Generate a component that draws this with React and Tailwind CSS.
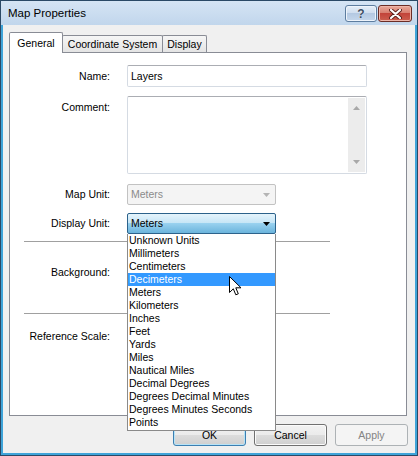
import React from 'react'

const UNITS = [
  'Unknown Units',
  'Millimeters',
  'Centimeters',
  'Decimeters',
  'Meters',
  'Kilometers',
  'Inches',
  'Feet',
  'Yards',
  'Miles',
  'Nautical Miles',
  'Decimal Degrees',
  'Degrees Decimal Minutes',
  'Degrees Minutes Seconds',
  'Points',
]

function Label({ children, className = '' }) {
  return <div className={`w-[100px] shrink-0 text-right ${className}`}>{children}</div>
}

function Arrow({ color }) {
  return (
    <svg width="7" height="4" viewBox="0 0 7 4" className="shrink-0">
      <path d="M0 0H7L3.5 4Z" fill={color} />
    </svg>
  )
}

function Button({ children, variant }) {
  if (variant === 'disabled') {
    return (
      <div className="w-[73px] h-[22px] rounded-[3px] border border-[#adb2b5] bg-[#f4f4f4] text-[#838383] flex items-center justify-center">
        {children}
      </div>
    )
  }
  const border = variant === 'default' ? 'border-[#3c7fb1] shadow-[inset_0_0_0_1px_#b7e3f7]' : 'border-[#707070] shadow-[inset_0_0_0_1px_#fbfbfb]'
  return (
    <div className={`w-[73px] h-[22px] rounded-[3px] border ${border} bg-[linear-gradient(#f2f2f2,#ebebeb_50%,#dddddd_50%,#cfcfcf)] flex items-center justify-center`}>
      {children}
    </div>
  )
}

function Cursor() {
  return (
    <svg width="13" height="20" viewBox="0 0 13 20" className="absolute left-[101px] top-[42px]">
      <path d="M0.5 0.5V16.5L4.3 12.8L6.8 18.8L9.3 17.8L6.8 11.8H12Z" fill="#fff" stroke="#000" strokeWidth="1" strokeLinejoin="miter" />
    </svg>
  )
}

export default function App() {
  return (
    <div className="w-[418px] h-[456px] bg-[#2b4966] p-px font-['Liberation_Sans',Arial,sans-serif] text-[10.5px] leading-[13px] text-black select-none">
      <div className="w-full h-full flex flex-col">
        {/* title bar */}
        <div className="h-[24px] shrink-0 flex items-start bg-[linear-gradient(#d5e4f4,#c1d6ec)] pl-[7px] pr-[5px]">
          <div className="flex-1 pt-[5px] text-[11.5px] leading-[15px] text-black">Map Properties</div>
          <div className="flex gap-px pt-[4px]">
            <div className="w-[32px] h-[17px] rounded-[3px] border border-[#5d7d9f] bg-[linear-gradient(#e6eff8,#cddcee_50%,#b4c9e2_50%,#c5d7ec)] shadow-[inset_0_0_0_1px_#eef4fb] flex items-center justify-center">
              <span className="text-[12px] leading-[12px] font-bold text-[#3c4d63] [text-shadow:0_0_1px_#fff]">?</span>
            </div>
            <div className="w-[34px] h-[17px] rounded-[3px] border border-[#6b2d26] bg-[linear-gradient(#e9a99b,#d67b6c_50%,#c2443a_50%,#cc5f4f)] shadow-[inset_0_0_0_1px_#eeb5a9] flex items-center justify-center">
              <svg width="13" height="10" viewBox="0 0 13 10">
                <path d="M2 1L11 9M11 1L2 9" stroke="#5a1f1a" strokeWidth="4" strokeLinecap="round" />
                <path d="M2 1L11 9M11 1L2 9" stroke="#fff" strokeWidth="2.2" strokeLinecap="round" />
              </svg>
            </div>
          </div>
        </div>

        {/* client */}
        <div className="flex-1 flex flex-col bg-[#f0f0f0] border-x-2 border-b-2 border-[#3fa4d9] pl-[6px] pr-[8px] pt-[7px] pb-[7px]">
          {/* tabs */}
          <div className="flex items-end h-[20px] relative z-10">
            <div className="w-[54px] h-[21px] -mb-px bg-white border border-b-0 border-[#898c95] rounded-t-[2px] text-center pt-[4px] relative z-10">General</div>
            <div className="w-[101px] h-[17px] -ml-px border border-b-0 border-[#898c95] rounded-t-[2px] bg-[linear-gradient(#f6f6f6,#e4e4e4)] text-center pt-[2px]">Coordinate System</div>
            <div className="w-[45px] h-[17px] -ml-px border border-b-0 border-[#898c95] rounded-t-[2px] bg-[linear-gradient(#f6f6f6,#e4e4e4)] text-center pt-[2px]">Display</div>
          </div>

          {/* panel */}
          <div className="h-[364px] w-[398px] bg-white border border-[#898c95] pt-[12px] flex flex-col">
            <div className="flex items-center h-[22px]">
              <Label>Name:</Label>
              <div className="ml-[17px] w-[240px] h-[22px] border border-[#d5dbe3] border-t-[#abadb3] rounded-[2px] flex items-center pl-[3px]">Layers</div>
            </div>

            <div className="flex items-start mt-[9px]">
              <Label className="pt-[5px]">Comment:</Label>
              <div className="ml-[17px] w-[240px] h-[78px] border border-[#d5dbe3] border-t-[#abadb3] rounded-[2px] flex justify-end p-px">
                <div className="w-[17px] h-full bg-[#ececec] flex flex-col items-center justify-between py-[8px]">
                  <svg width="7" height="4" viewBox="0 0 7 4"><path d="M3.5 0L7 4H0Z" fill="#a8a8a8" /></svg>
                  <svg width="7" height="4" viewBox="0 0 7 4"><path d="M0 0H7L3.5 4Z" fill="#a8a8a8" /></svg>
                </div>
              </div>
            </div>

            <div className="flex items-center mt-[10px] h-[21px]">
              <Label>Map Unit:</Label>
              <div className="ml-[17px] w-[149px] h-[21px] border border-[#c2c2c2] rounded-[2px] bg-[#f4f4f4] text-[#8b8b8b] flex items-center justify-between pl-[3px] pr-[5px]">
                <span>Meters</span>
                <Arrow color="#b4b4b4" />
              </div>
            </div>

            <div className="flex items-center mt-[8px] h-[21px] relative z-20">
              <Label>Display Unit:</Label>
              <div className="ml-[17px] w-[149px] h-[21px] relative">
                <div className="w-full h-full border border-[#2c628b] rounded-[2px] bg-[linear-gradient(#e5f4fc,#c4e5f6_50%,#98d1ef_50%,#6bb4dc)] flex items-center justify-between pl-[3px] pr-[5px]">
                  <span>Meters</span>
                  <Arrow color="#000" />
                </div>
                {/* open list */}
                <div className="absolute left-0 top-full w-[149px] bg-white border border-t-0 border-[#8a8a8a] pb-px">
                  {UNITS.map((u) => (
                    <div
                      key={u}
                      className={`h-[13px] leading-[13px] pl-px whitespace-nowrap ${u === 'Decimeters' ? 'bg-[#3399ff] text-white' : ''}`}
                    >
                      {u}
                    </div>
                  ))}
                  <Cursor />
                </div>
              </div>
            </div>

            <div className="mt-[7px] ml-[14px] w-[306px] border-t border-[#a0a0a0]" />

            <div className="flex items-center mt-[19px] h-[23px]">
              <Label>Background:</Label>
            </div>

            <div className="mt-[29px] ml-[14px] w-[306px] border-t border-[#a0a0a0]" />

            <div className="flex items-center mt-[11px] h-[23px]">
              <Label>Reference Scale:</Label>
            </div>
          </div>

          {/* buttons */}
          <div className="flex justify-end gap-[8px] mt-[8px] -mr-[1px]">
            <Button variant="default">OK</Button>
            <Button>Cancel</Button>
            <Button variant="disabled">Apply</Button>
          </div>
        </div>
      </div>
    </div>
  )
}
